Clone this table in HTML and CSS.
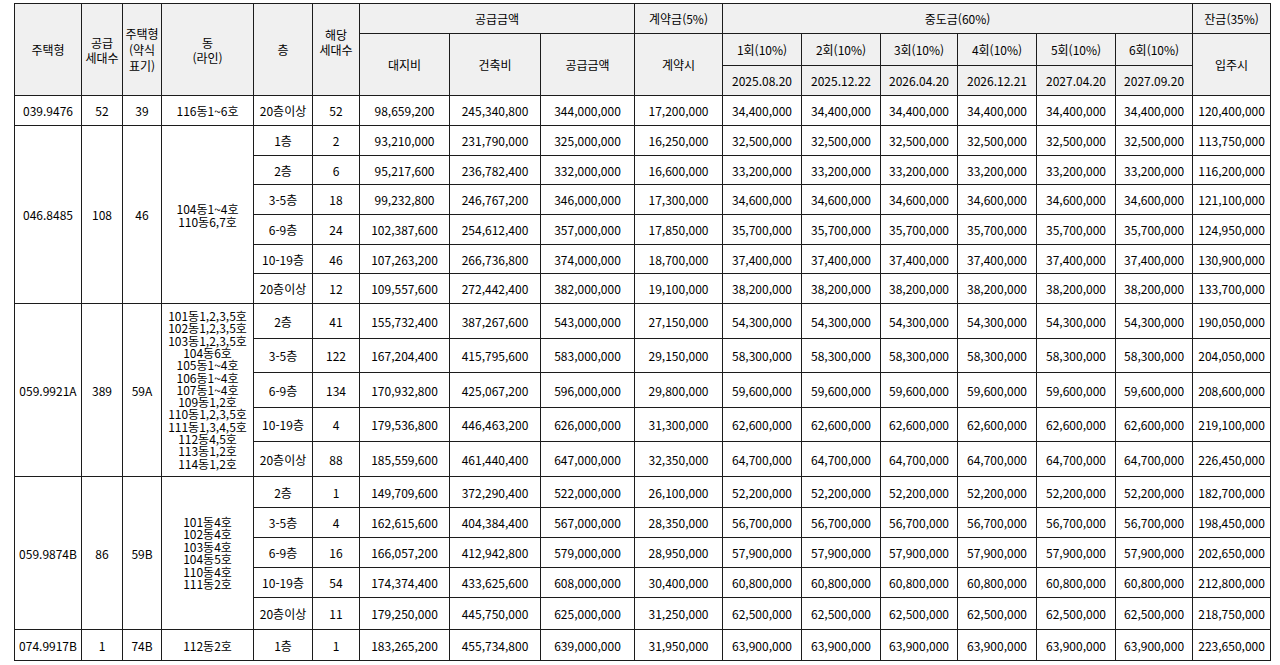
FILE: index.html
```html
<!DOCTYPE html>
<html lang="ko">
<head>
<meta charset="utf-8">
<title>공급금액 및 납부일정</title>
<link rel="stylesheet" href="styles.css">
</head>
<body>
<div class="wrap">
<table class="price">
<colgroup>
<col class="c67"><col class="c41"><col class="c39"><col class="c92"><col class="c59"><col class="c47">
<col class="c90"><col class="c91"><col class="c94"><col class="c88">
<col class="c79"><col class="c79"><col class="c77"><col class="c79"><col class="c79"><col class="c77"><col class="c78">
</colgroup>
<thead>
<tr class="h1">
<th rowspan="3">주택형</th>
<th rowspan="3">공급<br>세대수</th>
<th rowspan="3" class="tight">주택형<br>(약식<br>표기)</th>
<th rowspan="3">동<br>(라인)</th>
<th rowspan="3">층</th>
<th rowspan="3">해당<br>세대수<br>&nbsp;</th>
<th colspan="3">공급금액</th>
<th>계약금(5%)</th>
<th colspan="6">중도금(60%)</th>
<th>잔금(35%)</th>
</tr>
<tr class="h2">
<th rowspan="2">대지비</th>
<th rowspan="2">건축비</th>
<th rowspan="2">공급금액</th>
<th rowspan="2">계약시</th>
<th>1회(10%)</th><th>2회(10%)</th><th>3회(10%)</th><th>4회(10%)</th><th>5회(10%)</th><th>6회(10%)</th>
<th rowspan="2">입주시</th>
</tr>
<tr class="h3">
<th>2025.08.20</th><th>2025.12.22</th><th>2026.04.20</th><th>2026.12.21</th><th>2027.04.20</th><th>2027.09.20</th>
</tr>
</thead>
<tbody>
<tr class="r30">
<td>039.9476</td><td>52</td><td>39</td><td>116동1~6호</td><td>20층이상</td><td>52</td>
<td>98,659,200</td><td>245,340,800</td><td>344,000,000</td><td>17,200,000</td>
<td>34,400,000</td><td>34,400,000</td><td>34,400,000</td><td>34,400,000</td><td>34,400,000</td><td>34,400,000</td><td>120,400,000</td>
</tr>

<tr class="r30">
<td rowspan="6">046.8485</td><td rowspan="6">108</td><td rowspan="6">46</td><td rowspan="6" class="dong lh13">104동1~4호<br>110동6,7호</td>
<td>1층</td><td>2</td>
<td>93,210,000</td><td>231,790,000</td><td>325,000,000</td><td>16,250,000</td>
<td>32,500,000</td><td>32,500,000</td><td>32,500,000</td><td>32,500,000</td><td>32,500,000</td><td>32,500,000</td><td>113,750,000</td>
</tr>
<tr class="r29">
<td>2층</td><td>6</td>
<td>95,217,600</td><td>236,782,400</td><td>332,000,000</td><td>16,600,000</td>
<td>33,200,000</td><td>33,200,000</td><td>33,200,000</td><td>33,200,000</td><td>33,200,000</td><td>33,200,000</td><td>116,200,000</td>
</tr>
<tr class="r30">
<td>3-5층</td><td>18</td>
<td>99,232,800</td><td>246,767,200</td><td>346,000,000</td><td>17,300,000</td>
<td>34,600,000</td><td>34,600,000</td><td>34,600,000</td><td>34,600,000</td><td>34,600,000</td><td>34,600,000</td><td>121,100,000</td>
</tr>
<tr class="r30">
<td>6-9층</td><td>24</td>
<td>102,387,600</td><td>254,612,400</td><td>357,000,000</td><td>17,850,000</td>
<td>35,700,000</td><td>35,700,000</td><td>35,700,000</td><td>35,700,000</td><td>35,700,000</td><td>35,700,000</td><td>124,950,000</td>
</tr>
<tr class="r29">
<td>10-19층</td><td>46</td>
<td>107,263,200</td><td>266,736,800</td><td>374,000,000</td><td>18,700,000</td>
<td>37,400,000</td><td>37,400,000</td><td>37,400,000</td><td>37,400,000</td><td>37,400,000</td><td>37,400,000</td><td>130,900,000</td>
</tr>
<tr class="r30">
<td>20층이상</td><td>12</td>
<td>109,557,600</td><td>272,442,400</td><td>382,000,000</td><td>19,100,000</td>
<td>38,200,000</td><td>38,200,000</td><td>38,200,000</td><td>38,200,000</td><td>38,200,000</td><td>38,200,000</td><td>133,700,000</td>
</tr>

<tr class="r35">
<td rowspan="5">059.9921A</td><td rowspan="5">389</td><td rowspan="5">59A</td>
<td rowspan="5" class="dong lh123">101동1,2,3,5호<br>102동1,2,3,5호<br>103동1,2,3,5호<br>104동6호<br>105동1~4호<br>106동1~4호<br>107동1~4호<br>109동1,2호<br>110동1,2,3,5호<br>111동1,3,4,5호<br>112동4,5호<br>113동1,2호<br>114동1,2호</td>
<td>2층</td><td>41</td>
<td>155,732,400</td><td>387,267,600</td><td>543,000,000</td><td>27,150,000</td>
<td>54,300,000</td><td>54,300,000</td><td>54,300,000</td><td>54,300,000</td><td>54,300,000</td><td>54,300,000</td><td>190,050,000</td>
</tr>
<tr class="r34">
<td>3-5층</td><td>122</td>
<td>167,204,400</td><td>415,795,600</td><td>583,000,000</td><td>29,150,000</td>
<td>58,300,000</td><td>58,300,000</td><td>58,300,000</td><td>58,300,000</td><td>58,300,000</td><td>58,300,000</td><td>204,050,000</td>
</tr>
<tr class="r35">
<td>6-9층</td><td>134</td>
<td>170,932,800</td><td>425,067,200</td><td>596,000,000</td><td>29,800,000</td>
<td>59,600,000</td><td>59,600,000</td><td>59,600,000</td><td>59,600,000</td><td>59,600,000</td><td>59,600,000</td><td>208,600,000</td>
</tr>
<tr class="r34">
<td>10-19층</td><td>4</td>
<td>179,536,800</td><td>446,463,200</td><td>626,000,000</td><td>31,300,000</td>
<td>62,600,000</td><td>62,600,000</td><td>62,600,000</td><td>62,600,000</td><td>62,600,000</td><td>62,600,000</td><td>219,100,000</td>
</tr>
<tr class="r35">
<td>20층이상</td><td>88</td>
<td>185,559,600</td><td>461,440,400</td><td>647,000,000</td><td>32,350,000</td>
<td>64,700,000</td><td>64,700,000</td><td>64,700,000</td><td>64,700,000</td><td>64,700,000</td><td>64,700,000</td><td>226,450,000</td>
</tr>

<tr class="r31">
<td rowspan="5">059.9874B</td><td rowspan="5">86</td><td rowspan="5">59B</td>
<td rowspan="5" class="dong lh125">101동4호<br>102동4호<br>103동4호<br>104동5호<br>110동4호<br>111동2호</td>
<td>2층</td><td>1</td>
<td>149,709,600</td><td>372,290,400</td><td>522,000,000</td><td>26,100,000</td>
<td>52,200,000</td><td>52,200,000</td><td>52,200,000</td><td>52,200,000</td><td>52,200,000</td><td>52,200,000</td><td>182,700,000</td>
</tr>
<tr class="r30">
<td>3-5층</td><td>4</td>
<td>162,615,600</td><td>404,384,400</td><td>567,000,000</td><td>28,350,000</td>
<td>56,700,000</td><td>56,700,000</td><td>56,700,000</td><td>56,700,000</td><td>56,700,000</td><td>56,700,000</td><td>198,450,000</td>
</tr>
<tr class="r30">
<td>6-9층</td><td>16</td>
<td>166,057,200</td><td>412,942,800</td><td>579,000,000</td><td>28,950,000</td>
<td>57,900,000</td><td>57,900,000</td><td>57,900,000</td><td>57,900,000</td><td>57,900,000</td><td>57,900,000</td><td>202,650,000</td>
</tr>
<tr class="r30">
<td>10-19층</td><td>54</td>
<td>174,374,400</td><td>433,625,600</td><td>608,000,000</td><td>30,400,000</td>
<td>60,800,000</td><td>60,800,000</td><td>60,800,000</td><td>60,800,000</td><td>60,800,000</td><td>60,800,000</td><td>212,800,000</td>
</tr>
<tr class="r32">
<td>20층이상</td><td>11</td>
<td>179,250,000</td><td>445,750,000</td><td>625,000,000</td><td>31,250,000</td>
<td>62,500,000</td><td>62,500,000</td><td>62,500,000</td><td>62,500,000</td><td>62,500,000</td><td>62,500,000</td><td>218,750,000</td>
</tr>

<tr class="r31">
<td>074.9917B</td><td>1</td><td>74B</td><td>112동2호</td><td>1층</td><td>1</td>
<td>183,265,200</td><td>455,734,800</td><td>639,000,000</td><td>31,950,000</td>
<td>63,900,000</td><td>63,900,000</td><td>63,900,000</td><td>63,900,000</td><td>63,900,000</td><td>63,900,000</td><td>223,650,000</td>
</tr>
</tbody>
</table>
</div>
</body>
</html>
```

FILE: styles.css
```css
html, body {
  margin: 0;
  padding: 0;
  background: #ffffff;
}

.wrap {
  padding: 3px 0 0 14px;
}

.price {
  border-collapse: collapse;
  table-layout: fixed;
  width: 1256px;
  font-family: "Noto Sans CJK KR", "Noto Sans", sans-serif;
  font-size: 12px;
  color: #000000;
}

.price th,
.price td {
  border: 1px solid #1c1c1c;
  padding: 0 1px;
  text-align: center;
  vertical-align: middle;
  font-weight: normal;
  line-height: 15px;
  white-space: nowrap;
  overflow: hidden;
}

.price th {
  background: #f0f0f0;
}

.price td {
  background: #ffffff;
}

.price .tight {
  line-height: 16px;
}

.price .dong.lh13 { line-height: 13px; }
.price .dong.lh123 { line-height: 12.3px; }
.price .dong.lh125 { line-height: 12.5px; }

.c67 { width: 67px; }
.c41 { width: 41px; }
.c39 { width: 39px; }
.c92 { width: 92px; }
.c59 { width: 59px; }
.c47 { width: 47px; }
.c90 { width: 90px; }
.c91 { width: 91px; }
.c94 { width: 94px; }
.c88 { width: 88px; }
.c79 { width: 79px; }
.c77 { width: 77px; }
.c78 { width: 78px; }

.h1 { height: 30px; }
.h2 { height: 32px; }
.h3 { height: 30px; }
.r29 { height: 29px; }
.r30 { height: 30px; }
.r31 { height: 31px; }
.r32 { height: 32px; }
.r34 { height: 34px; }
.r35 { height: 35px; }
```
